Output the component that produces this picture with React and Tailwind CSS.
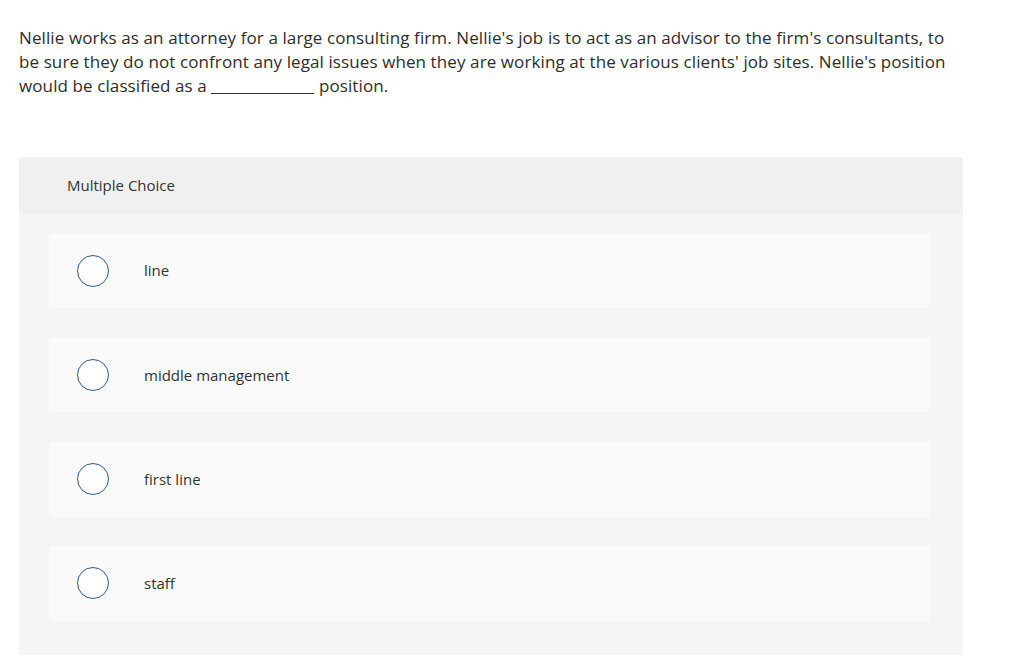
const options = ["line", "middle management", "first line", "staff"];

function Option({ label }) {
  return (
    <div className="flex h-[75px] items-center rounded-[3px] bg-[#fafafa]">
      <span className="ml-[28px] box-border h-[32px] w-[32px] shrink-0 rounded-full border-[1.5px] border-[#2b5e94] bg-white"></span>
      <span className="ml-[35px] text-[15px] text-[#333]">{label}</span>
    </div>
  );
}

export default function App() {
  return (
    <div className="min-h-screen bg-white font-['Open_Sans',sans-serif] text-[#2d2d2d]">
      <div className="px-[19px] pt-[26px]">
        <p className="w-[935px] text-[17px] leading-[24px] tracking-[0.1px]">
          Nellie works as an attorney for a large consulting firm. Nellie's job is to act as an advisor to the firm's
          consultants, to be sure they do not confront any legal issues when they are working at the various clients'
          job sites. Nellie's position would be classified as a{" "}
          <span className="inline-block w-[103px] translate-y-[2px] border-b border-[#2d2d2d] align-baseline"></span>{" "}
          position.
        </p>
      </div>
      <div className="mx-[19px] mt-[59px] w-[944px] overflow-hidden rounded-t-[3px] bg-[#f5f5f5]">
        <div className="flex h-[57px] items-center bg-[#f0f0f0] pl-[48px] text-[15px] text-[#333]">
          Multiple Choice
        </div>
        <div className="flex flex-col gap-[29.3px] pb-[34px] pl-[30px] pr-[33px] pt-[19px]">
          {options.map((o) => (
            <Option key={o} label={o} />
          ))}
        </div>
      </div>
    </div>
  );
}
